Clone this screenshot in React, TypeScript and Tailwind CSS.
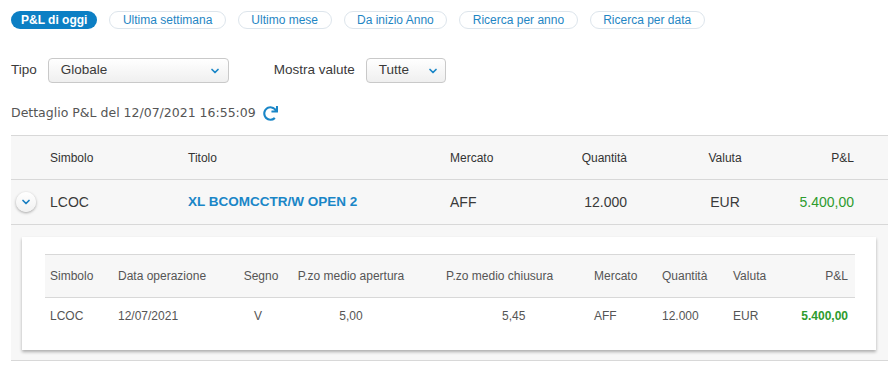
import React from 'react';
import { ChevronDown } from 'lucide-react';
import { FaRedo } from 'react-icons/fa';

const filters = ['Ultima settimana', 'Ultimo mese', 'Da inizio Anno', 'Ricerca per anno', 'Ricerca per data'];

const Select = ({ value, width, pad }: { value: string; width: string; pad: string }) => (
  <div
    className={`flex h-[25px] items-center justify-between rounded-[4px] border border-[#c9c9c9] bg-gradient-to-b from-white to-[#efefef] ${width} ${pad}`}
  >
    <span className="text-[13.5px] text-[#3a3a3a]">{value}</span>
    <ChevronDown size={12} strokeWidth={3.5} className="text-[#1a86c7]" />
  </div>
);

export default function App() {
  return (
    <div className="min-h-screen bg-white pl-[11px] pt-[11px] font-['Liberation_Sans',Arial,sans-serif] text-[#3a3a3a]">
      {/* Period filters */}
      <div className="flex gap-3">
        <button className="h-[18px] rounded-full bg-[#0c7fc4] px-[10px] text-[12px] font-bold leading-[18px] text-white">
          P&amp;L di oggi
        </button>
        {filters.map((f) => (
          <button
            key={f}
            className="h-[18px] rounded-full border border-[#dde5ec] px-[12.5px] text-[12px] leading-[16px] text-[#1f86c4]"
          >
            {f}
          </button>
        ))}
      </div>

      {/* Tipo / valute */}
      <div className="mt-[29px] flex items-center">
        <span className="text-[13.5px]">Tipo</span>
        <div className="ml-[11px]">
          <Select value="Globale" width="w-[181px]" pad="pl-[12px] pr-[7px]" />
        </div>
        <span className="ml-[45px] text-[13.5px]">Mostra valute</span>
        <div className="ml-[11px]">
          <Select value="Tutte" width="w-[80px]" pad="pl-[12px] pr-[6px]" />
        </div>
      </div>

      {/* Timestamp */}
      <div className="mt-[22px] flex h-[16px] items-center">
        <span className="font-['DejaVu_Sans',Verdana,sans-serif] text-[12.5px] text-[#555]">
          Dettaglio P&amp;L del 12/07/2021 16:55:09
        </span>
        <FaRedo size={15} className="ml-[7px] text-[#1a86c7]" />
      </div>

      {/* Main table */}
      <div className="mt-[14px] border-t border-b border-[#d8d8d8] bg-[#f7f7f7]">
        <div className="grid h-[44px] grid-cols-[39px_138px_262px_90px_87px_53px_90px_1fr] items-center border-b border-[#d8d8d8] text-[12px] text-[#333]">
          <div />
          <div>Simbolo</div>
          <div>Titolo</div>
          <div>Mercato</div>
          <div className="text-right">Quantità</div>
          <div />
          <div className="text-center">Valuta</div>
          <div className="pr-[34px] text-right">P&amp;L</div>
        </div>
        <div className="grid h-[45px] grid-cols-[39px_138px_262px_90px_87px_53px_90px_1fr] items-center border-b border-[#d8d8d8] text-[14px]">
          <div className="pl-[5px]">
            <div className="flex h-[20px] w-[20px] items-center justify-center rounded-full bg-gradient-to-b from-white to-[#f1f1f1] shadow-[0_1px_3px_rgba(0,0,0,0.35)]">
              <ChevronDown size={12} strokeWidth={3.5} className="text-[#1a7fc1]" />
            </div>
          </div>
          <div>LCOC</div>
          <div className="text-[13.5px] font-bold text-[#1a86c7]">XL BCOMCCTR/W OPEN 2</div>
          <div>AFF</div>
          <div className="text-right">12.000</div>
          <div />
          <div className="text-center">EUR</div>
          <div className="pr-[34px] text-right text-[#2e9b2e]">5.400,00</div>
        </div>

        {/* Expanded detail */}
        <div className="pb-[10px] pl-[11px] pr-[12px] pt-[12px]">
          <div className="bg-white pb-[16px] pl-[23px] pr-[21px] pt-[17px] shadow-[0_2px_3px_rgba(0,0,0,0.3)]">
            <div className="grid h-[44px] grid-cols-[68px_119px_58px_122px_177px_68px_71px_62px_1fr] items-center border-t border-b border-[#d8d8d8] bg-[#f7f7f7] text-[12px] text-[#555]">
              <div className="pl-[5px]">Simbolo</div>
              <div className="pl-[5px]">Data operazione</div>
              <div className="text-center">Segno</div>
              <div className="text-center">P.zo medio apertura</div>
              <div className="pl-[34px]">P.zo medio chiusura</div>
              <div className="pl-[5px]">Mercato</div>
              <div className="pl-[5px]">Quantità</div>
              <div className="pl-[5px]">Valuta</div>
              <div className="pr-[7px] text-right">P&amp;L</div>
            </div>
            <div className="grid h-[36px] grid-cols-[68px_119px_58px_122px_177px_68px_71px_62px_1fr] items-center text-[12px] text-[#555]">
              <div className="pl-[5px]">LCOC</div>
              <div className="pl-[5px]">12/07/2021</div>
              <div className="pr-[6px] text-center">V</div>
              <div className="text-center">5,00</div>
              <div className="pl-[90px]">5,45</div>
              <div className="pl-[5px]">AFF</div>
              <div className="pl-[5px]">12.000</div>
              <div className="pl-[5px]">EUR</div>
              <div className="pr-[7px] text-right font-bold text-[#2e9b2e]">5.400,00</div>
            </div>
          </div>
        </div>
      </div>
    </div>
  );
}
